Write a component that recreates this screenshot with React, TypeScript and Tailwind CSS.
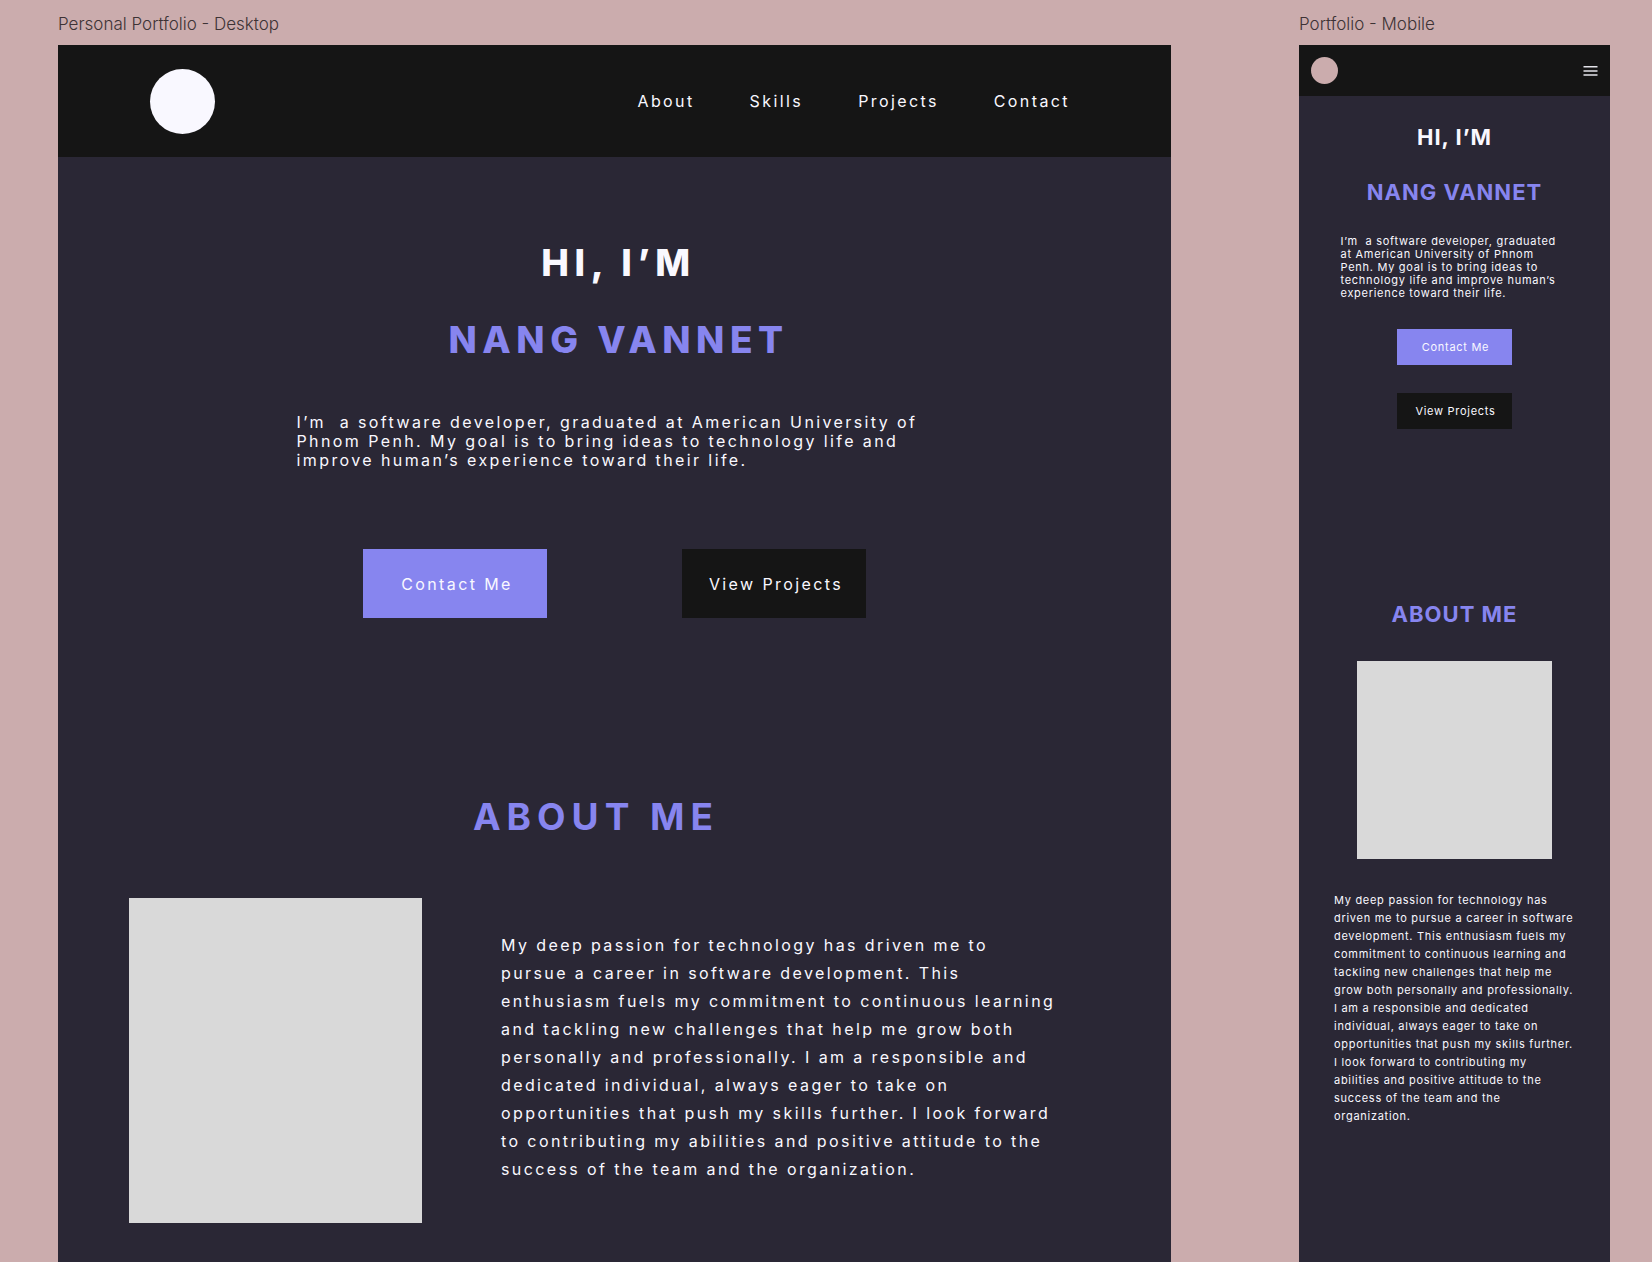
import { clsx } from "clsx";

const navItems = ["About", "Skills", "Projects", "Contact"];

const intro =
  "I’m \u00a0a software developer, graduated at American University of Phnom Penh. My goal is to bring ideas to technology life and improve human’s experience toward their life.";

const about =
  "My deep passion for technology has driven me to pursue a career in software development. This enthusiasm fuels my commitment to continuous learning and tackling new challenges that help me grow both personally and professionally. I am a responsible and dedicated individual, always eager to take on opportunities that push my skills further. I look forward to contributing my abilities and positive attitude to the success of the team and the organization.";

function FrameLabel({ children }: { children: string }) {
  return <p className="h-[45px] truncate pt-3 text-[17px] leading-6 font-light text-[#3d3335]">{children}</p>;
}

function ActionButton({ label, primary, className }: { label: string; primary?: boolean; className: string }) {
  return (
    <button type="button" className={clsx("text-[#f9f8ff]", primary ? "bg-[#8785ef]" : "bg-[#151515]", className)}>
      {label}
    </button>
  );
}

function DesktopFrame() {
  return (
    <section aria-label="Desktop" className="flex flex-col">
      <FrameLabel>Personal Portfolio - Desktop</FrameLabel>
      <div className="flex-1 bg-[#2a2735] pb-8 text-[16px] tracking-[0.15em] text-[#f9f8ff]">
        <header className="flex h-28 items-center justify-between bg-[#151515] pr-[101px] pl-[92px]">
          <div className="size-[65px] rounded-full bg-[#f9f8ff]" />
          <nav className="flex gap-[55px]">
            {navItems.map((item) => (
              <a key={item} href={"#" + item.toLowerCase()}>
                {item}
              </a>
            ))}
          </nav>
        </header>

        <div className="flex flex-col items-center pt-[83px]">
          <h1 className="flex flex-col items-center gap-8 pl-2 text-[37px] leading-[45px] font-extrabold tracking-[0.15em]">
            <span>HI, I’M</span>
            <span className="text-[#8785ef]">NANG VANNET</span>
          </h1>
          <p className="mt-[51px] w-[636px] max-w-full leading-[19px]">{intro}</p>
          <div className="mt-[79px] flex gap-[135px]">
            <ActionButton label="Contact Me" primary className="h-[69px] w-[184px] pl-1" />
            <ActionButton label="View Projects" className="h-[69px] w-[184px] pl-1" />
          </div>
        </div>

        <div className="pt-[176px]">
          <h2 className="pr-[37px] text-center text-[37px] leading-[45px] font-bold tracking-[6px] text-[#8785ef]">
            ABOUT ME
          </h2>
          <div className="mt-[59px] flex items-start gap-[79px] pr-[99px] pl-[71px]">
            <div className="h-[325px] w-[293px] shrink-0 bg-[#d9d9d9]" />
            <p className="max-w-[559px] pt-[33px] leading-7">{about}</p>
          </div>
        </div>
      </div>
    </section>
  );
}

function MobileFrame() {
  return (
    <section aria-label="Mobile" className="flex flex-col">
      <FrameLabel>Portfolio - Mobile</FrameLabel>
      <div className="flex-1 bg-[#2a2735] pb-8 text-[11px] tracking-[0.065em] text-[#f9f8ff]">
        <header className="flex h-[51px] items-center justify-between bg-[#151515] px-3">
          <div className="size-[27px] rounded-full bg-[#cbacad]" />
          <button type="button" aria-label="Menu">
            <svg width="15" height="11" viewBox="0 0 15 11" fill="none" stroke="#e4e3ea" strokeWidth="1.5">
              <path d="M.5 1.8h14M.5 5.9h14M.5 10h14" />
            </svg>
          </button>
        </header>

        <div className="flex flex-col items-center pt-7">
          <h1 className="flex flex-col items-center gap-7 text-[22px] leading-[27px] font-bold tracking-[1px]">
            <span>HI, I’M</span>
            <span className="text-[#8785ef]">NANG VANNET</span>
          </h1>
          <p className="mt-[29px] w-[228px] max-w-full leading-[13px]">{intro}</p>
          <div className="mt-[29px] flex flex-col gap-7">
            <ActionButton label="Contact Me" primary className="h-9 w-[115px] pl-0.5" />
            <ActionButton label="View Projects" className="h-9 w-[115px] pl-0.5" />
          </div>
        </div>

        <div className="flex flex-col items-center pt-[172px]">
          <h2 className="text-[22px] leading-[27px] font-bold tracking-[1px] text-[#8785ef]">ABOUT ME</h2>
          <div className="mt-[33px] h-[198px] w-[195px] bg-[#d9d9d9]" />
          <p className="mt-8 w-[241px] leading-[18px]">{about}</p>
        </div>
      </div>
    </section>
  );
}

export default function App() {
  return (
    <main className="grid min-h-screen grid-cols-[1113fr_311fr] gap-x-32 bg-[#cbacad] pr-[42px] pl-[58px] font-['Inter',sans-serif]">
      <DesktopFrame />
      <MobileFrame />
    </main>
  );
}
